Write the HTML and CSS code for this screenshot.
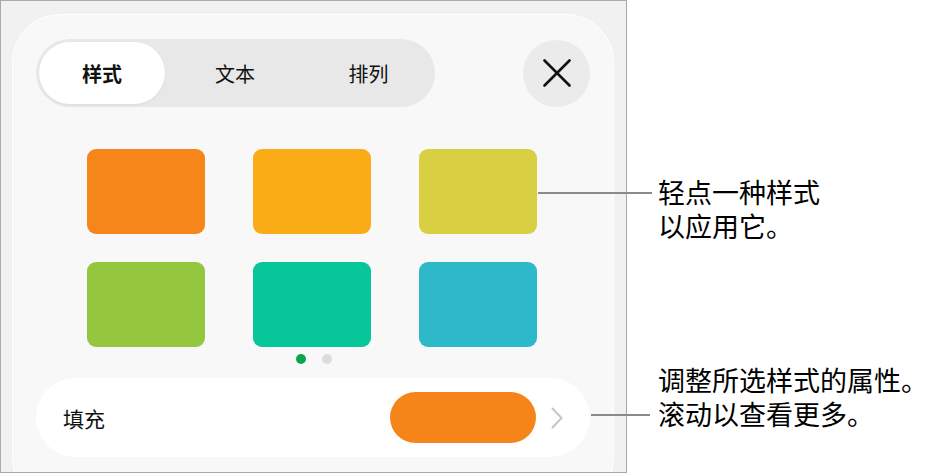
FILE: index.html
```html
<!DOCTYPE html>
<html lang="zh">
<head>
<meta charset="utf-8">
<link rel="stylesheet" href="styles.css">
</head>
<body>
<div class="stage">
  <div class="frame">
    <div class="panel">
      <div class="header">
        <div class="segmented">
          <div class="seg active">样式</div>
          <div class="seg">文本</div>
          <div class="seg">排列</div>
        </div>
        <div class="close">
          <svg width="28" height="28" viewBox="0 0 28 28"><path d="M1.5 1.5 L26.5 26.5 M26.5 1.5 L1.5 26.5" stroke="#111" stroke-width="2.6" stroke-linecap="round" fill="none"/></svg>
        </div>
      </div>
      <div class="swatches">
        <div class="swatch s1"></div>
        <div class="swatch s2"></div>
        <div class="swatch s3"></div>
        <div class="swatch s4"></div>
        <div class="swatch s5"></div>
        <div class="swatch s6"></div>
      </div>
      <div class="dots"><span class="dot on"></span><span class="dot"></span></div>
      <div class="fill-row">
        <span class="fill-label">填充</span>
        <span class="fill-pill"></span>
        <svg class="chev" width="12" height="22" viewBox="0 0 12 22"><path d="M1.5 1.5 L10.5 11 L1.5 20.5" stroke="#c6c6c6" stroke-width="2" fill="none" stroke-linecap="round" stroke-linejoin="round"/></svg>
      </div>
    </div>
  </div>
  <div class="callout c1">
    <div class="leader l1"></div>
    <div class="ctext t1"><div>轻点一种样式</div><div>以应用它。</div></div>
  </div>
  <div class="callout c2">
    <div class="leader l2"></div>
    <div class="ctext t2"><div>调整所选样式的属性。</div><div>滚动以查看更多。</div></div>
  </div>
</div>
</body>
</html>
```
FILE: styles.css
```css
* { box-sizing: border-box; }
html, body { margin: 0; padding: 0; background: #fff; }
body {
  font-family: "Noto Sans CJK SC", "Noto Sans", sans-serif;
  color: #000;
}
.stage {
  position: relative;
  width: 936px;
  height: 473px;
  overflow: hidden;
}
.frame {
  width: 627px;
  height: 473px;
  border: 1px solid #a9a9a9;
  background: #f1f1f1;
  overflow: hidden;
}
.panel {
  margin: 13px 0 0 11px;
  width: 602px;
  height: 492px;
  border-radius: 48px;
  background: #f8f8f8;
  border: 1px solid #ffffff;
  padding: 24px 23px 0 23px;
}
.header {
  display: flex;
  align-items: center;
  justify-content: space-between;
}
.segmented {
  width: 399px;
  height: 68px;
  border-radius: 34px;
  background: #e8e8e8;
  padding: 3px;
  display: grid;
  grid-template-columns: 126px 140px 1fr;
}
.seg {
  display: flex;
  align-items: center;
  justify-content: center;
  font-size: 20px;
  color: #111;
}
.seg.active {
  background: #fff;
  border-radius: 31px;
  font-weight: 700;
  box-shadow: 0 1px 3px rgba(0,0,0,0.06);
}
.close {
  width: 67px;
  height: 67px;
  border-radius: 50%;
  background: #ebebeb;
  display: flex;
  align-items: center;
  justify-content: center;
}
.swatches {
  margin-top: 42px;
  display: grid;
  grid-template-columns: repeat(3, 118px);
  grid-auto-rows: 85px;
  column-gap: 48px;
  row-gap: 28px;
  justify-content: center;
  padding-right: 2px;
}
.swatch { border-radius: 9px; }
.s1 { background: #f7861a; }
.s2 { background: #f9ac16; }
.s3 { background: #d9cf42; }
.s4 { background: #94c73d; }
.s5 { background: #07c69a; }
.s6 { background: #2eb9cb; }
.dots {
  margin-top: 7px;
  height: 10px;
  display: flex;
  justify-content: center;
  gap: 16px;
  padding-left: 2px;
}
.dot {
  width: 10px;
  height: 10px;
  border-radius: 50%;
  background: #dcdcdc;
}
.dot.on { background: #0aa64f; }
.fill-row {
  margin-top: 14px;
  height: 79px;
  border-radius: 40px;
  background: #fff;
  display: flex;
  align-items: center;
  padding-left: 27px;
  padding-right: 27px;
}
.fill-label { font-size: 21px; color: #111; }
.fill-pill {
  margin-left: auto;
  width: 146px;
  height: 51px;
  border-radius: 26px;
  background: #f58519;
}
.chev { margin-left: 15px; }
.callout { position: absolute; left: 0; top: 0; }
.leader { position: absolute; height: 2px; background: #8a8a8a; }
.l1 { left: 538px; top: 192px; width: 114px; }
.l2 { left: 591px; top: 414px; width: 59px; }
.ctext {
  position: absolute;
  left: 658px;
  font-family: "Liberation Sans", "Noto Sans CJK SC", sans-serif;
  font-size: 27px;
  line-height: 34px;
  white-space: nowrap;
  color: #000;
}
.t1 { top: 177px; }
.t2 { top: 365px; }
```
